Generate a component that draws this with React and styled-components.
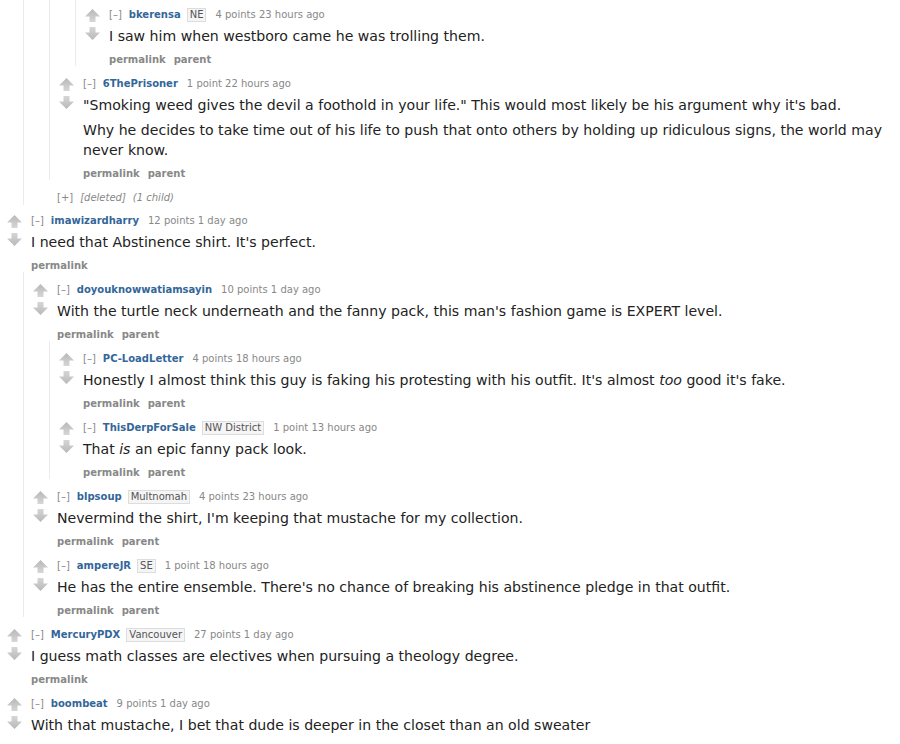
import React from "react";
import styled, { createGlobalStyle } from "styled-components";

const GlobalStyle = createGlobalStyle`
  html, body {
    margin: 0;
    padding: 0;
    background: #fff;
  }
  body {
    font-family: "DejaVu Sans", Verdana, "Liberation Sans", sans-serif;
    color: #222;
    overflow: hidden;
  }
`;

const Page = styled.div`
  width: 900px;
  height: 744px;
  overflow: hidden;
  padding-right: 12px;
  box-sizing: border-box;
`;

const Thread = styled.div`
  margin-top: -3px;
`;

const Children = styled.div`
  margin-left: 23px;
  border-left: 1px solid #ebebeb;
  padding-left: 2px;
`;

const CommentBox = styled.div`
  display: flex;
  padding-top: 11px;
`;

const Midcol = styled.div`
  width: 15px;
  margin-left: 7px;
  margin-right: 9px;
  flex: none;
  display: flex;
  flex-direction: column;
  gap: 5px;
  padding-top: 1px;
`;

const Entry = styled.div`
  flex: 1;
  min-width: 0;
`;

const Tagline = styled.p`
  margin: 0;
  font-size: 10px;
  line-height: 14px;
  color: #888;
  white-space: nowrap;
`;

const Expand = styled.span`
  color: #888;
  margin-right: 7px;
`;

const Author = styled.a`
  color: #369;
  font-weight: bold;
  margin-right: 9px;
  text-decoration: none;
`;

const Flair = styled.span`
  display: inline-block;
  color: #545454;
  background: #f5f5f5;
  border: 1px solid #ddd;
  padding: 0 2px;
  line-height: 12px;
  margin: 0 9px 0 -3px;
`;

const Meta = styled.span`
  color: #888;
`;

const Deleted = styled.em`
  color: #888;
  margin-right: 7px;
`;

const Body = styled.div`
  font-size: 14.1px;
  line-height: 20px;
  color: #222;
  margin-top: -1px;

  p {
    margin: 5px 0 0;
  }
`;

const Buttons = styled.ul`
  list-style: none;
  margin: 8px 0 0;
  padding: 0;
  display: flex;
  gap: 8px;
  font-size: 10px;
  line-height: 12px;
  font-weight: bold;

  li a {
    color: #888;
    text-decoration: none;
  }
`;

const Collapsed = styled.div`
  padding-top: 11px;
  padding-left: 31px;
  margin-bottom: -2px;
`;

function Arrow({ down }) {
  const id = down ? "gd" : "gu";
  return (
    <svg width="15" height="13" viewBox="0 0 15 13" style={down ? { transform: "scaleY(-1)" } : undefined}>
      <defs>
        <linearGradient id={id} x1="0" y1="0" x2="0" y2="1">
          <stop offset="0" stopColor="#b8b8b8" />
          <stop offset="1" stopColor="#d6d6d6" />
        </linearGradient>
      </defs>
      <path d="M7.5 0 L15 7.5 L10.5 7.5 L10.5 13 L4.5 13 L4.5 7.5 L0 7.5 Z" fill={`url(#${id})`} />
    </svg>
  );
}

function Comment({ c }) {
  if (c.deleted) {
    return (
      <Collapsed>
        <Tagline>
          <Expand>[+]</Expand>
          <Deleted>[deleted]</Deleted>
          <Deleted>(1 child)</Deleted>
        </Tagline>
      </Collapsed>
    );
  }
  return (
    <div>
      <CommentBox>
        <Midcol>
          <Arrow />
          <Arrow down />
        </Midcol>
        <Entry>
          <Tagline>
            <Expand>[–]</Expand>
            <Author>{c.author}</Author>
            {c.flair && <Flair>{c.flair}</Flair>}
            <Meta>
              {c.score} {c.time}
            </Meta>
          </Tagline>
          <Body>
            {c.body.map((p, i) => (
              <p key={i}>{p}</p>
            ))}
          </Body>
          <Buttons>
            <li><a>permalink</a></li>
            {c.parent && <li><a>parent</a></li>}
          </Buttons>
        </Entry>
      </CommentBox>
      {c.replies && c.replies.length > 0 && (
        <Children>
          {c.replies.map((r, i) => (
            <Comment key={i} c={r} />
          ))}
        </Children>
      )}
    </div>
  );
}

const topComments = [
  {
    author: "imawizardharry",
    score: "12 points",
    time: "1 day ago",
    body: ["I need that Abstinence shirt. It's perfect."],
    replies: [
      {
        author: "doyouknowwatiamsayin",
        score: "10 points",
        time: "1 day ago",
        parent: true,
        body: ["With the turtle neck underneath and the fanny pack, this man's fashion game is EXPERT level."],
        replies: [
          {
            author: "PC-LoadLetter",
            score: "4 points",
            time: "18 hours ago",
            parent: true,
            body: [
              <>Honestly I almost think this guy is faking his protesting with his outfit. It's almost <em>too</em> good it's fake.</>,
            ],
          },
          {
            author: "ThisDerpForSale",
            flair: "NW District",
            score: "1 point",
            time: "13 hours ago",
            parent: true,
            body: [<>That <em>is</em> an epic fanny pack look.</>],
          },
        ],
      },
      {
        author: "blpsoup",
        flair: "Multnomah",
        score: "4 points",
        time: "23 hours ago",
        parent: true,
        body: ["Nevermind the shirt, I'm keeping that mustache for my collection."],
      },
      {
        author: "ampereJR",
        flair: "SE",
        score: "1 point",
        time: "18 hours ago",
        parent: true,
        body: ["He has the entire ensemble. There's no chance of breaking his abstinence pledge in that outfit."],
      },
    ],
  },
  {
    author: "MercuryPDX",
    flair: "Vancouver",
    score: "27 points",
    time: "1 day ago",
    body: ["I guess math classes are electives when pursuing a theology degree."],
  },
  {
    author: "boombeat",
    score: "9 points",
    time: "1 day ago",
    body: ["With that mustache, I bet that dude is deeper in the closet than an old sweater"],
  },
];

const bkerensa = {
  author: "bkerensa",
  flair: "NE",
  score: "4 points",
  time: "23 hours ago",
  parent: true,
  body: ["I saw him when westboro came he was trolling them."],
};

const prisoner = {
  author: "6ThePrisoner",
  score: "1 point",
  time: "22 hours ago",
  parent: true,
  body: [
    "\"Smoking weed gives the devil a foothold in your life.\" This would most likely be his argument why it's bad.",
    "Why he decides to take time out of his life to push that onto others by holding up ridiculous signs, the world may never know.",
  ],
};

export default function App() {
  return (
    <Page>
      <GlobalStyle />
      <Thread>
        <Children>
          <Children>
            <Children>
              <Comment c={bkerensa} />
            </Children>
            <Comment c={prisoner} />
          </Children>
          <Comment c={{ deleted: true }} />
        </Children>
        {topComments.map((c, i) => (
          <Comment key={i} c={c} />
        ))}
      </Thread>
    </Page>
  );
}
